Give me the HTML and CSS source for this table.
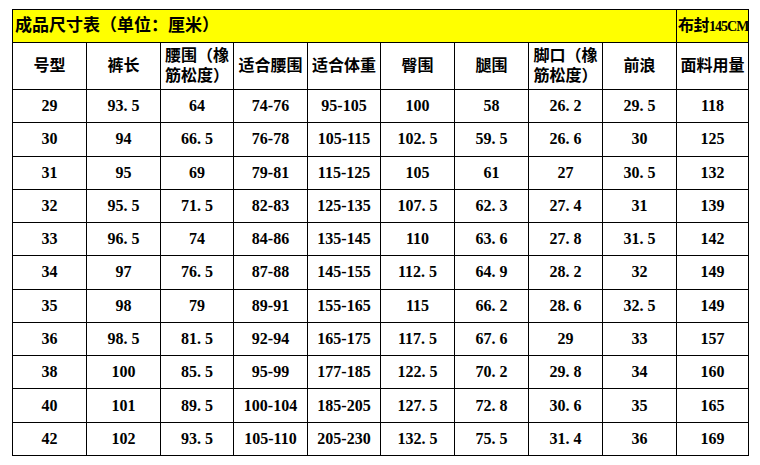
FILE: index.html
```html
<!DOCTYPE html>
<html lang="zh">
<head>
<meta charset="utf-8">
<title>成品尺寸表</title>
<link rel="stylesheet" href="styles.css">
</head>
<body>
<div class="wrap">
<table class="size-table">
<colgroup>
<col class="c74"><col class="c74"><col class="c73"><col class="c74"><col class="c73"><col class="c74"><col class="c74"><col class="c74"><col class="c74"><col class="c72">
</colgroup>
<tr class="title-row">
<td colspan="9" class="title">成品尺寸表（单位：厘米）</td>
<td class="fabric"><div class="clip">布封<span class="asc">145CM</span></div></td>
</tr>
<tr class="head-row">
<th>号型</th><th>裤长</th><th>腰围（橡筋松度）</th><th>适合腰围</th><th>适合体重</th><th>臀围</th><th>腿围</th><th>脚口（橡筋松度）</th><th>前浪</th><th>面料用量</th>
</tr>
<tr><td>29</td><td>93<span class="dp">.</span>5</td><td>64</td><td>74-76</td><td>95-105</td><td>100</td><td>58</td><td>26<span class="dp">.</span>2</td><td>29<span class="dp">.</span>5</td><td>118</td></tr>
<tr><td>30</td><td>94</td><td>66<span class="dp">.</span>5</td><td>76-78</td><td>105-115</td><td>102<span class="dp">.</span>5</td><td>59<span class="dp">.</span>5</td><td>26<span class="dp">.</span>6</td><td>30</td><td>125</td></tr>
<tr><td>31</td><td>95</td><td>69</td><td>79-81</td><td>115-125</td><td>105</td><td>61</td><td>27</td><td>30<span class="dp">.</span>5</td><td>132</td></tr>
<tr><td>32</td><td>95<span class="dp">.</span>5</td><td>71<span class="dp">.</span>5</td><td>82-83</td><td>125-135</td><td>107<span class="dp">.</span>5</td><td>62<span class="dp">.</span>3</td><td>27<span class="dp">.</span>4</td><td>31</td><td>139</td></tr>
<tr><td>33</td><td>96<span class="dp">.</span>5</td><td>74</td><td>84-86</td><td>135-145</td><td>110</td><td>63<span class="dp">.</span>6</td><td>27<span class="dp">.</span>8</td><td>31<span class="dp">.</span>5</td><td>142</td></tr>
<tr><td>34</td><td>97</td><td>76<span class="dp">.</span>5</td><td>87-88</td><td>145-155</td><td>112<span class="dp">.</span>5</td><td>64<span class="dp">.</span>9</td><td>28<span class="dp">.</span>2</td><td>32</td><td>149</td></tr>
<tr><td>35</td><td>98</td><td>79</td><td>89-91</td><td>155-165</td><td>115</td><td>66<span class="dp">.</span>2</td><td>28<span class="dp">.</span>6</td><td>32<span class="dp">.</span>5</td><td>149</td></tr>
<tr><td>36</td><td>98<span class="dp">.</span>5</td><td>81<span class="dp">.</span>5</td><td>92-94</td><td>165-175</td><td>117<span class="dp">.</span>5</td><td>67<span class="dp">.</span>6</td><td>29</td><td>33</td><td>157</td></tr>
<tr><td>38</td><td>100</td><td>85<span class="dp">.</span>5</td><td>95-99</td><td>177-185</td><td>122<span class="dp">.</span>5</td><td>70<span class="dp">.</span>2</td><td>29<span class="dp">.</span>8</td><td>34</td><td>160</td></tr>
<tr><td>40</td><td>101</td><td>89<span class="dp">.</span>5</td><td>100-104</td><td>185-205</td><td>127<span class="dp">.</span>5</td><td>72<span class="dp">.</span>8</td><td>30<span class="dp">.</span>6</td><td>35</td><td>165</td></tr>
<tr><td>42</td><td>102</td><td>93<span class="dp">.</span>5</td><td>105-110</td><td>205-230</td><td>132<span class="dp">.</span>5</td><td>75<span class="dp">.</span>5</td><td>31<span class="dp">.</span>4</td><td>36</td><td>169</td></tr>
</table>
</div>
</body>
</html>
```

FILE: styles.css
```css
html, body {
  margin: 0;
  padding: 0;
  background: #ffffff;
}
.wrap {
  padding: 9px 0 0 12px;
}
.size-table {
  border-collapse: collapse;
  table-layout: fixed;
  width: 737px;
  font-family: "Liberation Serif", "Noto Sans CJK SC", serif;
  font-weight: 700;
  font-size: 16px;
  color: #000000;
}
.c74 { width: 74px; }
.c73 { width: 73px; }
.c72 { width: 72px; }
.size-table td,
.size-table th {
  border: 1px solid #000000;
  padding: 0;
  text-align: center;
  vertical-align: middle;
  font-weight: 700;
  line-height: 20px;
}
.size-table tr {
  height: 33.27px;
}
.dp {
  letter-spacing: 4px;
}
.title-row {
  background: #ffff00;
}
.size-table .title-row {
  height: 33px;
}
.size-table .head-row {
  height: 47px;
}
.size-table .title {
  text-align: left;
  padding-left: 2px;
  font-size: 17px;
}
.size-table .fabric {
  text-align: left;
  padding-left: 1px;
}
.clip {
  overflow: hidden;
  white-space: nowrap;
  letter-spacing: -0.5px;
}
.asc {
  font-size: 14px;
  letter-spacing: -1px;
}
.head-row th {
  font-size: 16px;
  padding: 0 2px;
}
```
